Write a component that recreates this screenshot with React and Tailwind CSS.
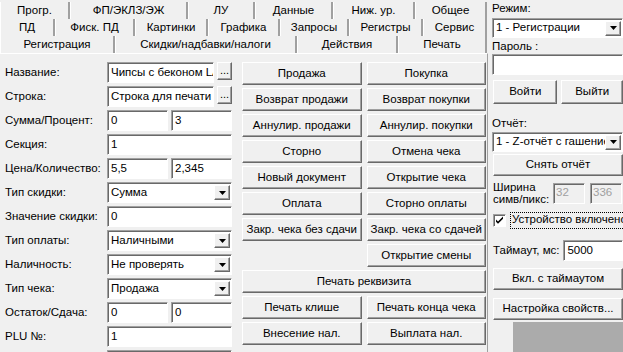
import React from 'react';

const font = { fontFamily: '"Liberation Sans", Arial, sans-serif' };

const sunken =
  'border border-t-[#a0a0a0] border-l-[#a0a0a0] border-r-white border-b-white shadow-[inset_1px_1px_0_#696969] bg-white';
const raised =
  'border border-t-white border-l-white border-r-[#696969] border-b-[#696969] shadow-[inset_-1px_-1px_0_#a0a0a0] bg-[#f0f0f0]';

const row1 = [
  ['Прогр.', 70],
  ['ФП/ЭКЛЗ/ЭЖ', 118],
  ['ЛУ', 67],
  ['Данные', 78],
  ['Ниж. ур.', 82],
  ['Общее', 72],
];
const row2 = [
  ['ПД', 55],
  ['Фиск. ПД', 80],
  ['Картинки', 73],
  ['Графика', 72],
  ['Запросы', 69],
  ['Регистры', 74],
  ['Сервис', 64],
];
const row3 = [
  ['Регистрация', 115],
  ['Скидки/надбавки/налоги', 182],
  ['Действия', 101],
  ['Печать', 89],
];

const TabRow = ({ tabs }) => (
  <div className="flex h-[17px]">
    {tabs.map(([label, w]) => (
      <div
        key={label}
        style={{ width: w }}
        className="flex items-center justify-center border-l border-l-white border-r-2 border-r-[#a0a0a0] text-[11.5px] leading-none"
      >
        {label}
      </div>
    ))}
  </div>
);

const Arrow = () => (
  <svg width="7" height="4" viewBox="0 0 7 4">
    <path d="M0 0h7L3.5 4z" fill="#000" />
  </svg>
);

const Input = ({ value, className = '' }) => (
  <div className={`${sunken} h-[21px] flex items-center pl-[3px] overflow-hidden whitespace-nowrap ${className}`}>
    {value}
  </div>
);

const Select = ({ value, className = '', h = 'h-[21px]' }) => (
  <div className={`${sunken} ${h} flex items-center ${className}`}>
    <div className="flex-1 pl-[3px] overflow-hidden whitespace-nowrap">{value}</div>
    <div className={`${raised} w-[16px] h-[15px] mr-[1px] flex items-center justify-center shrink-0`}>
      <Arrow />
    </div>
  </div>
);

const Btn = ({ children, className = '' }) => (
  <div className={`${raised} flex items-center justify-center whitespace-nowrap ${className}`}>
    {children}
  </div>
);

const FormRow = ({ label, children }) => (
  <div className="flex items-center h-[21px] mb-[3px]">
    <div className="w-[102px] whitespace-nowrap">{label}</div>
    <div className="flex w-[125px] gap-[3px]">{children}</div>
  </div>
);

const WithDots = ({ value }) => (
  <>
    <Input value={value} className="w-[107px]" />
    <Btn className="w-[15px] h-[18px] text-[11px] leading-none !items-end pb-[3px]">...</Btn>
  </>
);

const buttons = [
  ['Продажа', 'Покупка'],
  ['Возврат продажи', 'Возврат покупки'],
  ['Аннулир. продажи', 'Аннулир. покупки'],
  ['Сторно', 'Отмена чека'],
  ['Новый документ', 'Открытие чека'],
  ['Оплата', 'Сторно оплаты'],
  ['Закр. чека без сдачи', 'Закр. чека со сдачей'],
  [null, 'Открытие смены'],
];

export default function App() {
  return (
    <div style={font} className="w-[623px] h-[352px] bg-[#f0f0f0] text-black text-[11.5px] flex overflow-hidden">
      <div className="w-[488px] flex flex-col shrink-0">
        <div className="pt-[2px]">
          <TabRow tabs={row1} />
          <TabRow tabs={row2} />
          <TabRow tabs={row3} />
        </div>
        <div className="flex-1 border-t border-t-white border-r border-r-[#a0a0a0] flex pt-[8px] pl-[5px]">
          <div className="w-[232px] shrink-0">
            <FormRow label="Название:">
              <WithDots value="Чипсы с беконом LAYS" />
            </FormRow>
            <FormRow label="Строка:">
              <WithDots value="Строка для печати" />
            </FormRow>
            <FormRow label="Сумма/Процент:">
              <Input value="0" className="flex-1" />
              <Input value="3" className="flex-1" />
            </FormRow>
            <FormRow label="Секция:">
              <Input value="1" className="flex-1" />
            </FormRow>
            <FormRow label="Цена/Количество:">
              <Input value="5,5" className="flex-1" />
              <Input value="2,345" className="flex-1" />
            </FormRow>
            <FormRow label="Тип скидки:">
              <Select value="Сумма" className="flex-1" />
            </FormRow>
            <FormRow label="Значение скидки:">
              <Input value="0" className="flex-1" />
            </FormRow>
            <FormRow label="Тип оплаты:">
              <Select value="Наличными" className="flex-1" />
            </FormRow>
            <FormRow label="Наличность:">
              <Select value="Не проверять" className="flex-1" />
            </FormRow>
            <FormRow label="Тип чека:">
              <Select value="Продажа" className="flex-1" />
            </FormRow>
            <FormRow label="Остаток/Сдача:">
              <Input value="0" className="flex-1" />
              <Input value="0" className="flex-1" />
            </FormRow>
            <FormRow label="PLU №:">
              <Input value="1" className="flex-1" />
            </FormRow>
            <FormRow label="">
              <Input value="" className="flex-1" />
            </FormRow>
          </div>
          <div className="ml-[5px] w-[244px] grid grid-cols-2 gap-x-[5px] gap-y-[3px] content-start">
            {buttons.map(([a, b], i) => (
              <React.Fragment key={i}>
                {a ? <Btn className="h-[23px]">{a}</Btn> : <div className="h-[23px]" />}
                <Btn className="h-[23px]">{b}</Btn>
              </React.Fragment>
            ))}
            <Btn className="h-[23px] col-span-2">Печать реквизита</Btn>
            <Btn className="h-[23px]">Печать клише</Btn>
            <Btn className="h-[23px]">Печать конца чека</Btn>
            <Btn className="h-[23px]">Внесение нал.</Btn>
            <Btn className="h-[23px]">Выплата нал.</Btn>
          </div>
        </div>
      </div>

      <div className="flex-1 flex flex-col pl-[4px] min-w-0">
        <div className="h-[14px] mt-[1px] leading-[14px]">Режим:</div>
        <Select value="1 - Регистрации" className="mt-[3px] w-[131px]" h="h-[20px]" />
        <div className="h-[14px] leading-[14px] mt-[1px]">Пароль :</div>
        <Input value="" className="mt-[1px] w-[131px] h-[20px]" />
        <div className="flex gap-[4px] mt-[5px] pl-[1px]">
          <Btn className="w-[65px] h-[24px]">Войти</Btn>
          <Btn className="w-[62px] h-[24px]">Выйти</Btn>
        </div>
        <div className="h-[14px] leading-[14px] mt-[12px]">Отчёт:</div>
        <Select value="1 - Z-отчёт с гашением" className="mt-[2px] w-[131px]" h="h-[20px]" />
        <Btn className="mt-[2px] ml-[1px] w-[130px] h-[22px]">Снять отчёт</Btn>
        <div className="flex items-center mt-[5px] h-[24px] pl-[1px]">
          <div className="w-[60px] leading-[12px] whitespace-nowrap">
            Ширина
            <br />
            симв/пикс:
          </div>
          <div className={`${sunken} !bg-[#f0f0f0] w-[32px] h-[21px] text-[#a0a0a0] pl-[2px] flex items-center`}>32</div>
          <div className={`${sunken} !bg-[#f0f0f0] w-[32px] h-[21px] text-[#a0a0a0] pl-[2px] flex items-center ml-[5px]`}>336</div>
        </div>
        <div className="flex items-center mt-[6px] h-[18px] pl-[1px]">
          <div className={`${sunken} w-[13px] h-[13px] flex items-center justify-center shrink-0`}>
            <svg width="9" height="9" viewBox="0 0 9 9">
              <path d="M1 3.5l2 2 5-5v2.2L3 7.8 1 5.8z" fill="#000" />
            </svg>
          </div>
          <div className="ml-[4px] border border-dotted border-black px-[1px] h-[17px] flex items-center whitespace-nowrap">
            Устройство включено
          </div>
        </div>
        <div className="flex items-center mt-[11px] pl-[1px]">
          <div className="w-[71px] whitespace-nowrap">Таймаут, мс:</div>
          <Input value="5000" className="w-[60px] h-[20px]" />
        </div>
        <Btn className="mt-[7px] ml-[1px] w-[130px] h-[22px]">Вкл. с таймаутом</Btn>
        <Btn className="mt-[8px] ml-[1px] w-[130px] h-[22px]">Настройка свойств...</Btn>
        <div className="flex-1 mt-[2px] ml-[21px] bg-[#ababab]" />
      </div>
    </div>
  );
}
